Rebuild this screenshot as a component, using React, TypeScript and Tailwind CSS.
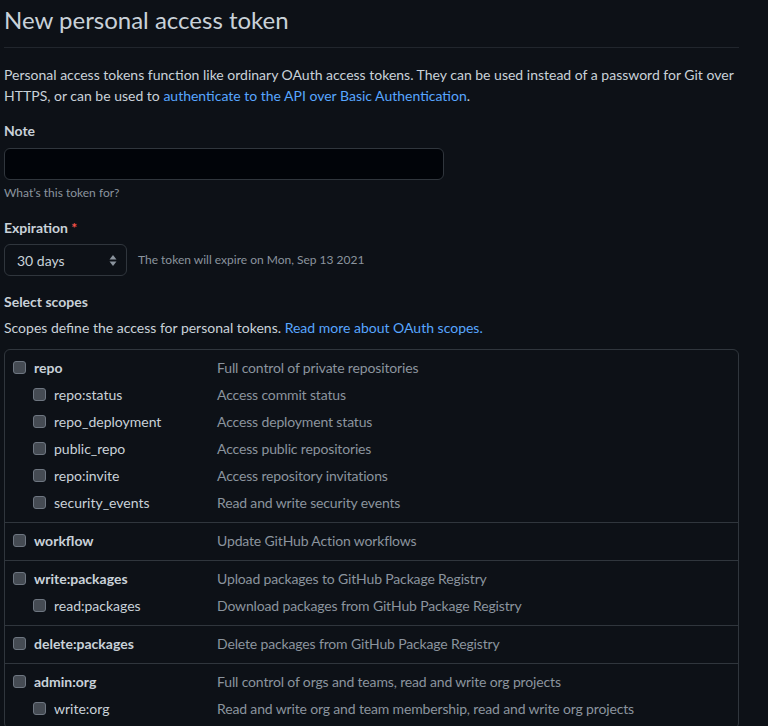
import React from 'react';

type Scope = { name: string; desc: string };
type Group = { top: Scope; subs?: Scope[] };

const groups: Group[] = [
  {
    top: { name: 'repo', desc: 'Full control of private repositories' },
    subs: [
      { name: 'repo:status', desc: 'Access commit status' },
      { name: 'repo_deployment', desc: 'Access deployment status' },
      { name: 'public_repo', desc: 'Access public repositories' },
      { name: 'repo:invite', desc: 'Access repository invitations' },
      { name: 'security_events', desc: 'Read and write security events' },
    ],
  },
  { top: { name: 'workflow', desc: 'Update GitHub Action workflows' } },
  {
    top: { name: 'write:packages', desc: 'Upload packages to GitHub Package Registry' },
    subs: [{ name: 'read:packages', desc: 'Download packages from GitHub Package Registry' }],
  },
  { top: { name: 'delete:packages', desc: 'Delete packages from GitHub Package Registry' } },
  {
    top: { name: 'admin:org', desc: 'Full control of orgs and teams, read and write org projects' },
    subs: [{ name: 'write:org', desc: 'Read and write org and team membership, read and write org projects' }],
  },
];

function Checkbox() {
  return <span className="block w-[13px] h-[13px] shrink-0 rounded-[3px] border border-[#6e7681] bg-[#454b53]" />;
}

function ScopeRow({ scope, sub }: { scope: Scope; sub?: boolean }) {
  return (
    <div className="flex items-center h-[27px]">
      <div className={`flex items-center w-[204px] shrink-0 ${sub ? 'pl-[20px]' : ''}`}>
        <Checkbox />
        <span className={`ml-[8px] text-[#c9d1d9] ${sub ? '' : 'font-bold'}`}>{scope.name}</span>
      </div>
      <span className="text-[#8b949e] tracking-[-0.15px]">{scope.desc}</span>
    </div>
  );
}

export default function App() {
  return (
    <div
      className="min-h-[726px] bg-[#0d1117] text-[#c9d1d9] text-[14px] leading-[21px] overflow-hidden"
      style={{ fontFamily: 'Lato, "Noto Sans", sans-serif' }}
    >
      <div className="ml-[4px] w-[735px] pt-[2px]">
        {/* Subhead */}
        <div className="border-b border-[#21262d] pb-[9px]">
          <h1 className="text-[24px] leading-[36px] font-normal">New personal access token</h1>
        </div>

        <p className="mt-[16px]">
          Personal access tokens function like ordinary OAuth access tokens. They can be used instead of a password for Git over
          <br />
          HTTPS, or can be used to{' '}
          <a className="text-[#58a6ff]">authenticate to the API over Basic Authentication</a>.
        </p>

        {/* Note */}
        <div className="mt-[14px] font-bold">Note</div>
        <div className="mt-[7px] w-[440px] h-[32px] rounded-[6px] border border-[#30363d] bg-[#010409]" />
        <div className="mt-[4px] text-[12px] leading-[18px] text-[#8b949e]">What’s this token for?</div>

        {/* Expiration */}
        <div className="mt-[15px] font-bold">
          Expiration <span className="text-[#f85149]">*</span>
        </div>
        <div className="mt-[6px] flex items-center">
          <div className="relative flex items-center w-[123px] h-[32px] rounded-[6px] border border-[#30363d] bg-[#0d1117] pl-[12px]">
            <span>30 days</span>
            <svg className="absolute right-[9px] top-[9px]" width="8" height="13" viewBox="0 0 8 13">
              <path d="M4 1 L7.5 5.5 H0.5 Z" fill="#8b949e" />
              <path d="M4 12 L7.5 7.5 H0.5 Z" fill="#8b949e" />
            </svg>
          </div>
          <span className="ml-[11px] text-[12px] leading-[18px] text-[#8b949e]">The token will expire on Mon, Sep 13 2021</span>
        </div>

        {/* Scopes */}
        <div className="mt-[15px] font-bold">Select scopes</div>
        <p className="mt-[5px]">
          Scopes define the access for personal tokens.{' '}
          <a className="text-[#58a6ff]">Read more about OAuth scopes.</a>
        </p>

        <div className="mt-[11px] rounded-[6px] border border-[#30363d]">
          {groups.map((g, i) => (
            <div key={g.top.name} className={`pl-[8px] pt-[4px] pb-[6px] ${i > 0 ? 'border-t border-[#30363d]' : ''}`}>
              <ScopeRow scope={g.top} />
              {g.subs?.map((s) => <ScopeRow key={s.name} scope={s} sub />)}
            </div>
          ))}
        </div>
      </div>
    </div>
  );
}
